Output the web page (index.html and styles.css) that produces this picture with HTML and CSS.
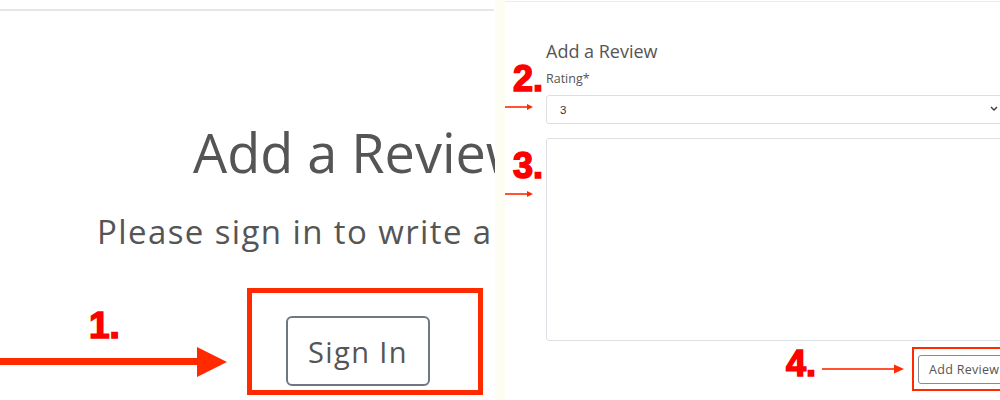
FILE: index.html
```html
<!DOCTYPE html>
<html lang="en">
<head>
<meta charset="utf-8">
<title>Add a Review</title>
<link rel="stylesheet" href="styles.css">
</head>
<body>
<div class="page">
  <section class="left">
    <div class="rule"></div>
    <h1 class="title">Add a Review</h1>
    <p class="sub">Please sign in to write a review.</p>
    <div class="signin-row">
      <div class="anno1">
        <span class="num n1">1.</span>
        <svg class="arrow-big" width="227" height="30" viewBox="0 0 227 30">
          <rect x="0" y="11" width="200" height="7" fill="#ff2a00"/>
          <polygon points="197,0 227,15 197,30" fill="#ff2a00"/>
        </svg>
      </div>
      <div class="hl-box">
        <button class="btn-signin" type="button">Sign In</button>
      </div>
    </div>
  </section>
  <div class="strip"></div>
  <section class="right">
    <div class="rule2"></div>
    <div class="form">
      <div class="cell-empty"></div>
      <h2 class="form-title">Add a Review</h2>

      <span class="num n2">2.</span>
      <label class="label">Rating*</label>

      <svg class="arrow-small a-select" width="28" height="6" viewBox="0 0 28 6">
        <rect x="0" y="2.2" width="23" height="1.6" fill="#ff2a00"/>
        <polygon points="22,0 28,3 22,6" fill="#ff2a00"/>
      </svg>
      <div class="select">
        <span class="select-val">3</span>
        <svg class="chev" width="8" height="5" viewBox="0 0 8 5">
          <path d="M1 1 L4 4 L7 1" fill="none" stroke="#444" stroke-width="1.5"/>
        </svg>
      </div>

      <div class="anno3">
        <span class="num n3">3.</span>
        <svg class="arrow-small" width="28" height="6" viewBox="0 0 28 6">
          <rect x="0" y="2.2" width="23" height="1.6" fill="#ff2a00"/>
          <polygon points="22,0 28,3 22,6" fill="#ff2a00"/>
        </svg>
      </div>
      <div class="textarea"></div>
    </div>
    <div class="submit-row">
      <span class="num n4">4.</span>
      <svg class="arrow-4" width="82" height="10" viewBox="0 0 82 10">
        <rect x="0" y="4.2" width="74" height="1.6" fill="#ff2a00"/>
        <polygon points="72,0.5 82,5 72,9.5" fill="#ff2a00"/>
      </svg>
      <div class="hl-box-small">
        <button class="btn-add" type="button">Add Review</button>
      </div>
    </div>
  </section>
</div>
</body>
</html>
```
FILE: styles.css
```css
* { box-sizing: border-box; }
html, body { margin: 0; padding: 0; background: #fff; }
body { font-family: "Open Sans", "Liberation Sans", sans-serif; color: #555; }

.page {
  display: flex;
  width: 1000px;
  height: 400px;
  overflow: hidden;
}

/* ---------- left panel ---------- */
.left {
  width: 495px;
  flex: none;
  overflow: hidden;
  white-space: nowrap;
  display: flex;
  flex-direction: column;
}
.rule {
  margin-top: 9px;
  height: 2px;
  width: 494px;
  background: #e6e6e6;
}
.title {
  margin: 109px 0 0;
  padding-left: 193px;
  font-size: 54px;
  font-weight: 400;
  line-height: 1.2;
  color: #555;
}
.sub {
  margin: 27px 0 0;
  padding-left: 97px;
  font-size: 33px;
  line-height: 1.2;
  letter-spacing: 1.4px;
  color: #555;
}
.signin-row {
  margin-top: 37px;
  display: flex;
  align-items: flex-start;
  height: 107px;
}
.anno1 {
  width: 247px;
  flex: none;
  display: flex;
  flex-direction: column;
}
.num {
  font-family: "Liberation Sans", Arial, sans-serif;
  font-weight: 700;
  color: #ff0000;
  -webkit-text-stroke: 1.6px #ff0000;
  line-height: 1;
  font-size: 36px;
}
.n1 {
  margin-top: 19px;
  padding-left: 89px;
  font-size: 37px;
  height: 37px;
}
.arrow-big { display: block; margin-top: 3px; }
.hl-box {
  width: 236px;
  height: 107px;
  border: 5px solid #ff2a00;
  padding: 23px 0 0 34px;
  flex: none;
}
.btn-signin {
  display: block;
  width: 144px;
  height: 70px;
  border: 2px solid #6f7780;
  border-radius: 6px;
  background: #fff;
  font-family: "Open Sans", "Liberation Sans", sans-serif;
  font-size: 29px;
  letter-spacing: 1.4px;
  color: #555;
  padding: 0;
}

.strip {
  width: 10px;
  flex: none;
  background: #fdfdf3;
}

/* ---------- right panel ---------- */
.right {
  width: 495px;
  flex: none;
  overflow: hidden;
  white-space: nowrap;
  display: flex;
  flex-direction: column;
}
.rule2 {
  margin-top: 1px;
  height: 1px;
  background: #ececec;
}
.form {
  padding-top: 38px;
  display: grid;
  grid-template-columns: 41px 462px;
  grid-template-rows: 22px 33px 29px auto;
}
.form-title {
  margin: 0;
  font-size: 18px;
  font-weight: 400;
  line-height: 22px;
  color: #555;
}
.n2 {
  padding-left: 8px;
  margin-top: -1px;
  height: 34px;
}
.label {
  padding-top: 8.6px;
  font-size: 12.5px;
  line-height: 15px;
  color: #555;
}
.arrow-small { display: block; }
.a-select { margin-top: 9px; }
.select {
  height: 29px;
  border: 1px solid #dcdfe4;
  border-radius: 3px;
  display: flex;
  align-items: center;
  padding: 0 9px 0 13px;
  justify-content: space-between;
}
.select-val {
  font-family: "Liberation Sans", Arial, sans-serif;
  font-size: 11.5px;
  color: #333;
}
.chev { display: block; margin-top: -2px; }
.anno3 {
  margin-top: 14px;
  display: flex;
  flex-direction: column;
}
.n3 {
  margin-top: 10px;
  padding-left: 8px;
  height: 36px;
}
.anno3 .arrow-small { margin-top: 7px; }
.textarea {
  margin-top: 14px;
  height: 203px;
  border: 1px solid #dde1e6;
  border-radius: 3px;
}
.submit-row {
  margin-top: 6px;
  padding-left: 281px;
  display: flex;
  align-items: flex-start;
}
.n4 {
  margin-top: -1px;
  width: 36px;
  flex: none;
}
.arrow-4 {
  display: block;
  flex: none;
  margin-top: 17px;
}
.hl-box-small {
  margin-left: 8px;
  width: 110px;
  height: 44px;
  flex: none;
  border: 2px solid #ff2a00;
  padding: 6px 0 0 4px;
}
.btn-add {
  display: block;
  height: 29px;
  padding: 0 10px;
  border: 1px solid #868c93;
  border-radius: 3px;
  background: #fff;
  font-family: "Open Sans", "Liberation Sans", sans-serif;
  font-size: 12.5px;
  letter-spacing: 0.3px;
  color: #555;
}
```
